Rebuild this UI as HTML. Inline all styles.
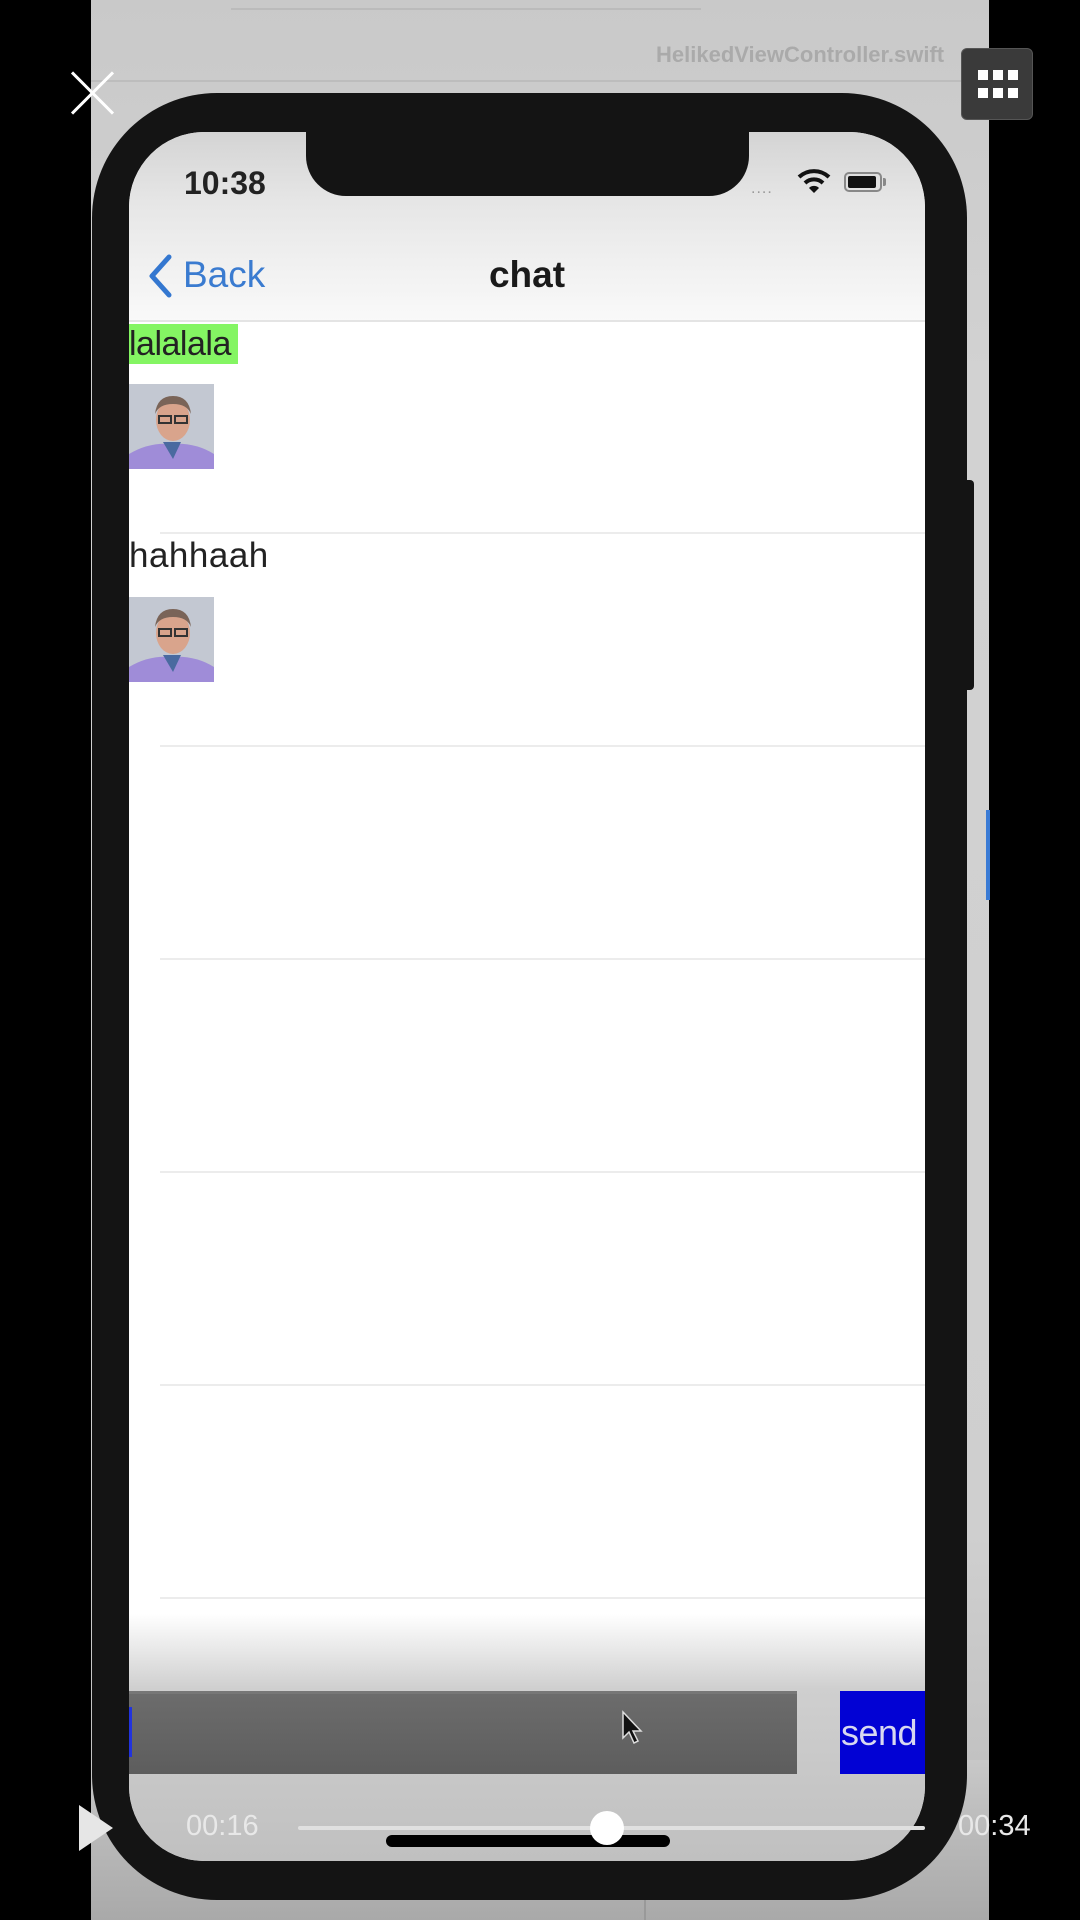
<!DOCTYPE html>
<html><head><meta charset="utf-8"><style>
*{margin:0;padding:0;box-sizing:border-box}
body{width:1080px;height:1920px;background:#000;position:relative;overflow:hidden;font-family:"Liberation Sans",sans-serif}
.abs{position:absolute}
#video{left:91px;top:0;width:898px;height:1920px;background:linear-gradient(#c9c9c9,#d2d2d2 20%,#cfcfcf 80%,#b9b9b9)}
#phone{left:92px;top:93px;width:875px;height:1807px;background:#141414;border-radius:125px}
#screen{left:129px;top:132px;width:796px;height:1729px;border-radius:75px;overflow:hidden;background:#fff}
.sep{position:absolute;left:31px;right:0;height:2px;background:#ececec}
.avatar{position:absolute;left:0;width:85px;height:85px}
</style></head><body>
<div id="video" class="abs">
  <div class="abs" style="left:140px;top:0;width:470px;height:10px;border-bottom:2px solid #bbb"></div>
  <div class="abs" style="left:0;top:80px;width:898px;height:2px;background:#bdbdbd"></div>
  <div class="abs" style="left:565px;top:42px;font-size:22px;color:#aaa;font-weight:bold">HelikedViewController.swift</div>
  <div class="abs" style="left:0;top:1760px;width:898px;height:160px;background:linear-gradient(#c8c8c8,#a9a9a9)"></div>
  <div class="abs" style="left:553px;top:1880px;width:2px;height:40px;background:#999"></div>
  <div class="abs" style="left:895px;top:810px;width:4px;height:90px;background:#3a7bd5"></div>
</div>
<div id="phone" class="abs"></div>
<div class="abs" style="left:966px;top:480px;width:8px;height:210px;background:#141414;border-radius:0 4px 4px 0"></div>
<div id="screen" class="abs">
  <div class="abs" style="left:0;top:0;width:796px;height:190px;background:linear-gradient(#d4d4d4,#e6e6e6 70px,#f0f0f0 130px,#f9f9f9 189px)"></div>
  <div class="abs" style="left:177px;top:-5px;width:443px;height:69px;background:#141414;border-radius:0 0 40px 40px"></div>
  <div class="abs" style="left:55px;top:33px;font-size:32px;font-weight:bold;color:#222">10:38</div>
  <div class="abs" style="left:622px;top:48px;font-size:16px;color:#999;letter-spacing:1px">....</div>
  <svg class="abs" style="left:668px;top:36px" width="34" height="26" viewBox="0 0 34 26"><path d="M2 9 A22 22 0 0 1 32 9" stroke="#111" stroke-width="4" fill="none"/><path d="M8 15 A13 13 0 0 1 26 15" stroke="#111" stroke-width="4" fill="none"/><path d="M12 20 L17 25 L22 20 A7 7 0 0 0 12 20Z" fill="#111"/></svg>
  <div class="abs" style="left:715px;top:40px;width:38px;height:20px;border:2px solid #888;border-radius:5px;padding:2px"><div style="width:28px;height:12px;background:#111;border-radius:2px"></div></div>
  <div class="abs" style="left:754px;top:46px;width:3px;height:8px;background:#888;border-radius:0 2px 2px 0"></div>
  <svg class="abs" style="left:18px;top:122px" width="26" height="44" viewBox="0 0 26 44"><path d="M22 3 L5 22 L22 41" stroke="#3477d0" stroke-width="5" fill="none" stroke-linecap="round" stroke-linejoin="round"/></svg>
  <div class="abs" style="left:54px;top:122px;font-size:37px;color:#3a7bd0">Back</div>
  <div class="abs" style="left:0;width:796px;top:122px;text-align:center;font-size:37px;font-weight:bold;color:#1a1a1a">chat</div>
  <div class="abs" style="left:0;top:188px;width:796px;height:2px;background:#e4e4e4"></div>
  <div class="abs" style="left:0;top:192px;width:109px;height:40px;background:#84f563;font-size:34px;line-height:40px;color:#222;overflow:hidden;letter-spacing:-0.5px">lalalala</div>
  <svg class="avatar" style="top:252px" viewBox="0 0 85 85"><rect width="85" height="85" fill="#c3c8d2"/><path d="M0 85 L0 70 Q20 58 42 60 Q66 58 85 70 L85 85Z" fill="#9f8cd8"/><path d="M34 58 L44 75 L52 58Z" fill="#4a6aa0"/><ellipse cx="44" cy="36" rx="17" ry="21" fill="#d9a48c"/><path d="M26 30 Q28 12 44 12 Q60 12 62 30 Q58 20 44 20 Q30 20 26 30Z" fill="#7a6458"/><rect x="30" y="32" width="12" height="7" fill="none" stroke="#333" stroke-width="2"/><rect x="46" y="32" width="12" height="7" fill="none" stroke="#333" stroke-width="2"/></svg>
  <div class="sep" style="top:400px"></div>
  <div class="abs" style="left:0;top:403px;font-size:35px;line-height:42px;color:#222;letter-spacing:0.5px">hahhaah</div>
  <svg class="avatar" style="top:465px" viewBox="0 0 85 85"><rect width="85" height="85" fill="#c3c8d2"/><path d="M0 85 L0 70 Q20 58 42 60 Q66 58 85 70 L85 85Z" fill="#9f8cd8"/><path d="M34 58 L44 75 L52 58Z" fill="#4a6aa0"/><ellipse cx="44" cy="36" rx="17" ry="21" fill="#d9a48c"/><path d="M26 30 Q28 12 44 12 Q60 12 62 30 Q58 20 44 20 Q30 20 26 30Z" fill="#7a6458"/><rect x="30" y="32" width="12" height="7" fill="none" stroke="#333" stroke-width="2"/><rect x="46" y="32" width="12" height="7" fill="none" stroke="#333" stroke-width="2"/></svg>
  <div class="sep" style="top:613px"></div>
  <div class="sep" style="top:826px"></div>
  <div class="sep" style="top:1039px"></div>
  <div class="sep" style="top:1252px"></div>
  <div class="sep" style="top:1465px"></div>
  <div class="abs" style="left:0;top:1467px;width:796px;height:262px;background:linear-gradient(#fff 0px,#fff 15px,#cfcfcf 90px,#c0c0c0 100%)"></div>
  <div class="abs" style="left:0;top:1559px;width:668px;height:83px;background:linear-gradient(#6c6c6c,#5d5d5d);border-top:3px solid #777"></div>
  <div class="abs" style="left:0;top:1575px;width:3px;height:50px;background:#2233dd"></div>
  <svg class="abs" style="left:492px;top:1578px" width="26" height="40" viewBox="0 0 26 40"><path d="M2 2 L2 28 L8 22 L13 33 L17 31 L12 21 L20 21Z" fill="#111" stroke="#ddd" stroke-width="1.5"/></svg>
  <div class="abs" style="left:711px;top:1559px;width:85px;height:83px;background:#0202d4;color:#d8d8f0;font-size:36px;line-height:83px;padding-left:1px;letter-spacing:-0.5px;overflow:hidden;white-space:nowrap">send</div>
  <div class="abs" style="left:257px;top:1703px;width:284px;height:12px;background:#000;border-radius:6px"></div>
</div>
<div class="abs" style="left:70px;top:70px;width:46px;height:46px">
  <div class="abs" style="left:21px;top:-6px;width:3px;height:58px;background:#fff;transform:rotate(45deg)"></div>
  <div class="abs" style="left:21px;top:-6px;width:3px;height:58px;background:#fff;transform:rotate(-45deg)"></div>
</div>
<div class="abs" style="left:961px;top:48px;width:72px;height:72px;background:#3a3a3a;border-radius:6px;border:1px solid #555"></div>
<div class="abs" style="left:978px;top:70px;width:40px;height:30px;display:grid;grid-template-columns:repeat(3,10px);column-gap:5px;row-gap:6px">
  <i style="background:#fff;height:10px"></i><i style="background:#fff;height:10px"></i><i style="background:#fff;height:10px"></i>
  <i style="background:#fff;height:10px"></i><i style="background:#fff;height:10px"></i><i style="background:#fff;height:10px"></i>
</div>
<svg class="abs" style="left:78px;top:1804px" width="36" height="48" viewBox="0 0 36 48"><path d="M1 1 L35 24 L1 47Z" fill="#e6e6e6"/></svg>
<div class="abs" style="left:186px;top:1810px;font-size:29px;color:#e8e8e8">00:16</div>
<div class="abs" style="left:958px;top:1810px;font-size:29px;color:#e8e8e8">00:34</div>
<div class="abs" style="left:298px;top:1826px;width:627px;height:4px;background:#e0e0e0;border-radius:2px"></div>
<div class="abs" style="left:590px;top:1811px;width:34px;height:34px;background:#fff;border-radius:50%"></div>
</body></html>
